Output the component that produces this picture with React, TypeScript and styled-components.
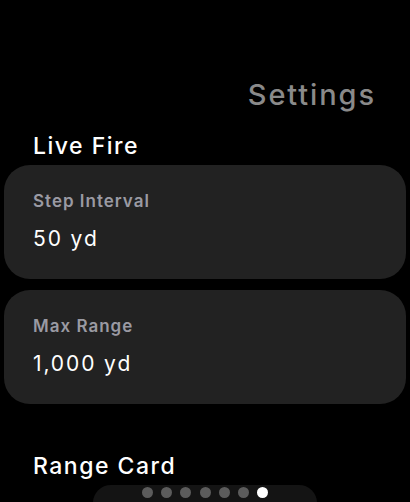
import React from 'react';
import styled, { createGlobalStyle } from 'styled-components';

const GlobalStyle = createGlobalStyle`
  html, body {
    margin: 0;
    padding: 0;
    background: #000;
    height: 100%;
    overflow: hidden;
  }
  body {
    font-family: Inter, 'Noto Sans', sans-serif;
    color: #fff;
    -webkit-font-smoothing: antialiased;
  }
`;

const Screen = styled.div`
  position: relative;
  width: 410px;
  height: 502px;
  overflow: hidden;
  background: #000;
`;

const Header = styled.div`
  display: flex;
  justify-content: flex-end;
  padding: 75px 34px 0 0;
  height: 40px;
`;

const PageTitle = styled.h1`
  margin: 0;
  font-size: 29px;
  line-height: 40px;
  font-weight: 500;
  letter-spacing: 1.9px;
  color: #8a8a8a;
`;

const Section = styled.section`
  display: flex;
  flex-direction: column;
  gap: 11px;
  padding: 16px 4px 0;
`;

const SectionTitle = styled.h2<{ $top?: number }>`
  margin: ${(p) => p.$top ?? 0}px 0 -7px;
  padding-left: 29px;
  font-size: 23px;
  line-height: 30px;
  font-weight: 500;
  letter-spacing: 1.5px;
  color: #fff;
`;

const Card = styled.div`
  display: flex;
  flex-direction: column;
  gap: 14px;
  height: 114px;
  box-sizing: border-box;
  padding: 26px 29px 0;
  border-radius: 26px;
  background: #222222;
`;

const CardLabel = styled.div`
  font-size: 17px;
  line-height: 20px;
  font-weight: 600;
  letter-spacing: 1px;
  color: #9a9aa3;
`;

const CardValue = styled.div`
  font-size: 21px;
  line-height: 28px;
  font-weight: 400;
  letter-spacing: 1.9px;
  color: #fff;
`;

const Indicator = styled.div`
  position: absolute;
  left: 93px;
  bottom: -20px;
  width: 224px;
  height: 37px;
  border-radius: 18px;
  background: #141414;
  display: flex;
  justify-content: center;
  padding-top: 2px;
  box-sizing: border-box;
  gap: 8.3px;
`;

const Dot = styled.span<{ $active?: boolean }>`
  width: 11px;
  height: 11px;
  border-radius: 50%;
  background: ${(p) => (p.$active ? '#ffffff' : '#5c5c5c')};
`;

const settings = [
  { label: 'Step Interval', value: '50 yd' },
  { label: 'Max Range', value: '1,000 yd' },
];

export default function App() {
  return (
    <Screen>
      <GlobalStyle />
      <Header>
        <PageTitle>Settings</PageTitle>
      </Header>
      <Section>
        <SectionTitle>Live Fire</SectionTitle>
        {settings.map((s) => (
          <Card key={s.label}>
            <CardLabel>{s.label}</CardLabel>
            <CardValue>{s.value}</CardValue>
          </Card>
        ))}
        <SectionTitle $top={36}>Range Card</SectionTitle>
      </Section>
      <Indicator>
        {[0, 1, 2, 3, 4, 5, 6].map((i) => (
          <Dot key={i} $active={i === 6} />
        ))}
      </Indicator>
    </Screen>
  );
}
